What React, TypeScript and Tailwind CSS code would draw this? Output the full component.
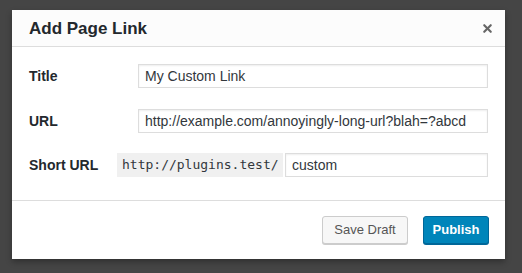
import { X } from 'lucide-react';

const font = { fontFamily: '"Liberation Sans", Arial, sans-serif' };
const inputClass = "h-[24px] border border-[#ddd] bg-white px-[6px] text-[14px] text-[#32373c] shadow-[inset_0_1px_2px_rgba(0,0,0,0.07)] outline-none";
const labelClass = "w-[88px] shrink-0 text-[14px] font-bold text-[#23282d]";

export default function App() {
  return (
    <div className="w-[522px] h-[273px] bg-[#454545] pt-[10px] pl-[12px]" style={font}>
      <div className="w-[493px] h-[249px] bg-white flex flex-col shadow-[0_3px_6px_rgba(0,0,0,0.3)]">
        <div className="h-[37px] shrink-0 bg-[#fcfcfc] border-b border-[#ddd] flex items-center justify-between pl-[17px] pr-[11px]">
          <h1 className="text-[17px] font-bold text-[#23282d] pt-[1px]">Add Page Link</h1>
          <X className="w-[13px] h-[13px] text-[#666]" strokeWidth={4} />
        </div>
        <div className="flex-1 flex flex-col gap-[21px] pl-[17px] pr-[17px] pt-[17px]">
          <div className="flex items-center">
            <label className={labelClass}>Title</label>
            <input className={inputClass + " ml-[21px] w-[350px]"} defaultValue="My Custom Link" style={font} />
          </div>
          <div className="flex items-center">
            <label className={labelClass}>URL</label>
            <input className={inputClass + " ml-[21px] w-[350px]"} defaultValue="http://example.com/annoyingly-long-url?blah=?abcd" style={font} />
          </div>
          <div className="flex items-center -mt-[1px]">
            <label className={labelClass}>Short URL</label>
            <span className="h-[24px] w-[166px] bg-[#f0f0f0] flex items-center pl-[5px] text-[13px] text-[#32373c]" style={{ fontFamily: '"DejaVu Sans Mono", monospace' }}>http://plugins.test/</span>
            <input className={inputClass + " ml-[2px] w-[203px]"} defaultValue="custom" style={font} />
          </div>
        </div>
        <div className="h-[59px] shrink-0 border-t border-[#ddd] flex items-center justify-end gap-[15px] pr-[16px]">
          <button className="h-[28px] w-[86px] rounded-[3px] border border-[#ccc] bg-[#f7f7f7] text-[13px] text-[#555] shadow-[0_1px_0_#ccc]" style={font}>Save Draft</button>
          <button className="h-[28px] w-[66px] rounded-[3px] border border-[#006799] bg-[#0085ba] text-[13px] font-bold text-white shadow-[0_1px_0_#006799]" style={font}>Publish</button>
        </div>
      </div>
    </div>
  );
}
